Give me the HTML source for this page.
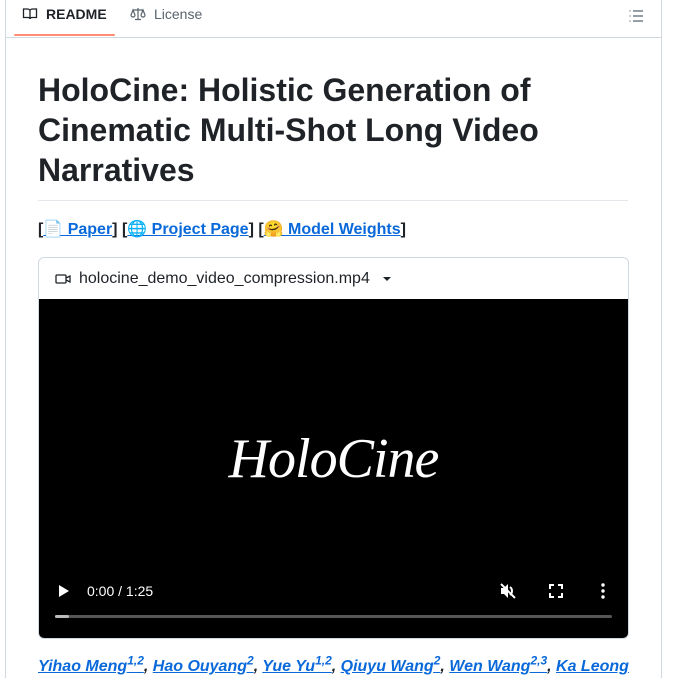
<!DOCTYPE html>
<html><head><meta charset="utf-8"><style>
html,body{margin:0;height:678px;overflow:hidden}
body{background:#fff;font-family:"Liberation Sans",Arial,sans-serif;color:#1f2328;position:relative}
.box{position:absolute;left:5px;top:0;width:655px;height:678px;border:1px solid #d1d9e0;border-top:none;border-bottom:none;box-sizing:content-box}
.tabs{position:absolute;left:6px;top:0;width:655px;height:37px;border-bottom:1px solid #d1d9e0;}
.tab{position:absolute;top:6px;font-size:14px;display:flex;align-items:center;gap:8px}
.ul{position:absolute;top:34px;width:101px;height:2px;background:#fd8c73;border-radius:1px}
h1{position:absolute;left:38px;top:70px;width:590px;margin:0;font-size:32px;line-height:40px;font-weight:700;}
.hr{position:absolute;left:38px;top:200px;width:590px;height:1px;background:#e3e7eb}
.links{position:absolute;left:38px;top:219px;font-size:16px;font-weight:700;}
a{color:#0969da;text-decoration:underline}
.vid{position:absolute;left:38px;top:257px;width:589px;height:380px;border:1px solid #d1d9e0;border-radius:6px;overflow:hidden}
.vh{height:41px;display:flex;align-items:center;padding-left:16px;gap:8px;font-size:16px;border-bottom:1px solid #d1d9e0}
.black{position:absolute;top:41px;left:0;right:0;bottom:0;background:#000}
.title{position:absolute;left:0;right:0;top:128px;text-align:center;color:#fff;font-family:"Liberation Serif",serif;font-style:italic;font-size:56px;letter-spacing:-1px}
.authors{position:absolute;left:38px;top:658px;font-size:16px;line-height:18px;font-weight:700;font-style:italic;white-space:nowrap;color:#1f2328;letter-spacing:0}
sup{font-size:12px;line-height:0}
</style></head><body>
<div class="box"></div>
<div class="tabs">
<div class="tab" style="left:16px;font-weight:700"><svg width="16" height="16" viewBox="0 0 16 16" fill="none" stroke="#1f2328" stroke-width="1.3"><path d="M1.5 3h4c1.2 0 2.5.8 2.5 2v8c0-1-1-1.5-2-1.5h-4.5zM14.5 3h-4c-1.2 0-2.5.8-2.5 2v8c0-1 1-1.5 2-1.5h4.5z"/></svg>README</div>
<div class="tab" style="left:124px;color:#59636e"><svg width="16" height="16" viewBox="0 0 16 16" fill="none" stroke="#59636e" stroke-width="1.2"><path d="M8 2v11M5 13.5h6M3 4h10M3 4l-2 5a2 2 0 004 0zM13 4l-2 5a2 2 0 004 0z"/></svg>License</div>
<div style="position:absolute;left:622px;top:8px"><svg width="16" height="16" viewBox="0 0 16 16" stroke="#59636e" stroke-width="1.3"><path d="M5 3h10M5 8h10M5 13h10M1.5 3h1M1.5 8h1M1.5 13h1"/></svg></div>
<div class="ul" style="left:8px"></div>
</div>
<h1>HoloCine: Holistic Generation of Cinematic Multi-Shot Long Video Narratives</h1>
<div class="hr"></div>
<div class="links">[<a href="#">📄 Paper</a>] [<a href="#">🌐 Project Page</a>] [<a href="#">🤗 Model Weights</a>]</div>
<div class="vid">
<div class="vh"><svg width="16" height="16" viewBox="0 0 16 16" fill="none" stroke="#1f2328" stroke-width="1.3"><rect x="1" y="4" width="10" height="8" rx="1"/><path d="M11 7l4-2v6l-4-2"/></svg>holocine_demo_video_compression.mp4 <svg width="10" height="6" viewBox="0 0 10 6" style="margin-left:4px"><path d="M1 1h8l-4 4z" fill="#1f2328"/></svg></div>
<div class="black">
<div class="title">HoloCine</div>
<div style="position:absolute;left:20px;top:286px;width:0;height:0;border-left:10px solid #fff;border-top:6px solid transparent;border-bottom:6px solid transparent"></div>
<div style="position:absolute;left:48px;top:284px;color:#fff;font-size:14px">0:00 / 1:25</div>
<svg style="position:absolute;left:460px;top:283px" width="18" height="18" viewBox="0 0 18 18"><path d="M2 6h3l4-4v14l-4-4H2z" fill="#fff"/><path d="M11 5a5 5 0 010 8M2 2l14 14" stroke="#fff" stroke-width="2" fill="none"/></svg>
<svg style="position:absolute;left:510px;top:285px" width="14" height="14" viewBox="0 0 14 14" fill="none" stroke="#fff" stroke-width="2"><path d="M1 5V1h4M9 1h4v4M13 9v4H9M5 13H1V9"/></svg>
<svg style="position:absolute;left:562px;top:284px" width="4" height="16" viewBox="0 0 4 16" fill="#fff"><circle cx="2" cy="2" r="1.7"/><circle cx="2" cy="8" r="1.7"/><circle cx="2" cy="14" r="1.7"/></svg>
<div style="position:absolute;left:16px;top:316px;width:557px;height:3px;background:#555;border-radius:2px"><div style="width:14px;height:3px;background:#bbb;border-radius:2px"></div></div>
</div>
</div>
<div class="authors"><a href="#">Yihao Meng<sup>1,2</sup></a>, <a href="#">Hao Ouyang<sup>2</sup></a>, <a href="#">Yue Yu<sup>1,2</sup></a>, <a href="#">Qiuyu Wang<sup>2</sup></a>, <a href="#">Wen Wang<sup>2,3</sup></a>, <a href="#">Ka Leong</a></div>
</body></html>
